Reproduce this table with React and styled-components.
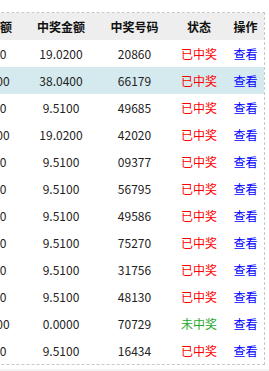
import styled, { createGlobalStyle } from "styled-components";

const GlobalStyle = createGlobalStyle`
  body {
    margin: 0;
    background: #fff;
    font-family: "Noto Sans CJK SC", "Microsoft YaHei", sans-serif;
  }
`

const Viewport = styled.div`
  width: 269px;
  overflow: hidden;
  display: flex;
  justify-content: flex-end;
  padding: 12px 4px 0 0;
  box-sizing: border-box;
`

const Panel = styled.div`
  flex-shrink: 0;
  border: 1px dashed #c8c8c8;
`

const Table = styled.table`
  width: 402px;
  border-collapse: collapse;
  table-layout: fixed;
  font-size: 12px;
  color: #222;
`

const HeadCell = styled.th`
  height: 27px;
  padding: 0;
  background: #eeeeee;
  font-weight: 700;
  color: #111;
  text-align: center;
`

const Row = styled.tr`
  background: ${({ active }) => (active ? "#d5eaee" : "#fff")};
`

const Cell = styled.td`
  height: 27px;
  padding: 0;
  text-align: center;
  white-space: nowrap;
`

const Status = styled.span`
  color: ${({ won }) => (won ? "#ff0000" : "#1faa2e")};
`

const Link = styled.a`
  color: #0000ff;
  text-decoration: none;
  cursor: pointer;
`

const Footer = styled.div`
  margin-top: 4px;
  height: 20px;
  background: #f2f2f2;
`

const columns = [
  { title: "期号", width: 90 },
  { title: "投注金额", width: 72 },
  { title: "中奖金额", width: 74 },
  { title: "中奖号码", width: 73 },
  { title: "状态", width: 56 },
  { title: "操作", width: 37 },
]

const rows = [
  ["20240101001", "1.0000", "19.0200", "20860", true],
  ["20240101002", "20.0000", "38.0400", "66179", true],
  ["20240101003", "1.0000", "9.5100", "49685", true],
  ["20240101004", "10.0000", "19.0200", "42020", true],
  ["20240101005", "1.0000", "9.5100", "09377", true],
  ["20240101006", "1.0000", "9.5100", "56795", true],
  ["20240101007", "1.0000", "9.5100", "49586", true],
  ["20240101008", "1.0000", "9.5100", "75270", true],
  ["20240101009", "1.0000", "9.5100", "31756", true],
  ["20240101010", "1.0000", "9.5100", "48130", true],
  ["20240101011", "10.0000", "0.0000", "70729", false],
  ["20240101012", "1.0000", "9.5100", "16434", true],
]

export default function App() {
  return (
    <>
      <GlobalStyle />
      <Viewport>
        <Panel>
          <Table>
            <colgroup>
              {columns.map((c) => (
                <col key={c.title} style={{ width: c.width }} />
              ))}
            </colgroup>
            <thead>
              <tr>
                {columns.map((c) => (
                  <HeadCell key={c.title}>{c.title}</HeadCell>
                ))}
              </tr>
            </thead>
            <tbody>
              {rows.map(([issue, bet, prize, code, won], i) => (
                <Row key={issue} active={i === 1}>
                  <Cell>{issue}</Cell>
                  <Cell>{bet}</Cell>
                  <Cell>{prize}</Cell>
                  <Cell>{code}</Cell>
                  <Cell>
                    <Status won={won}>{won ? "已中奖" : "未中奖"}</Status>
                  </Cell>
                  <Cell>
                    <Link>查看</Link>
                  </Cell>
                </Row>
              ))}
            </tbody>
          </Table>
        </Panel>
      </Viewport>
      <Footer />
    </>
  )
}
